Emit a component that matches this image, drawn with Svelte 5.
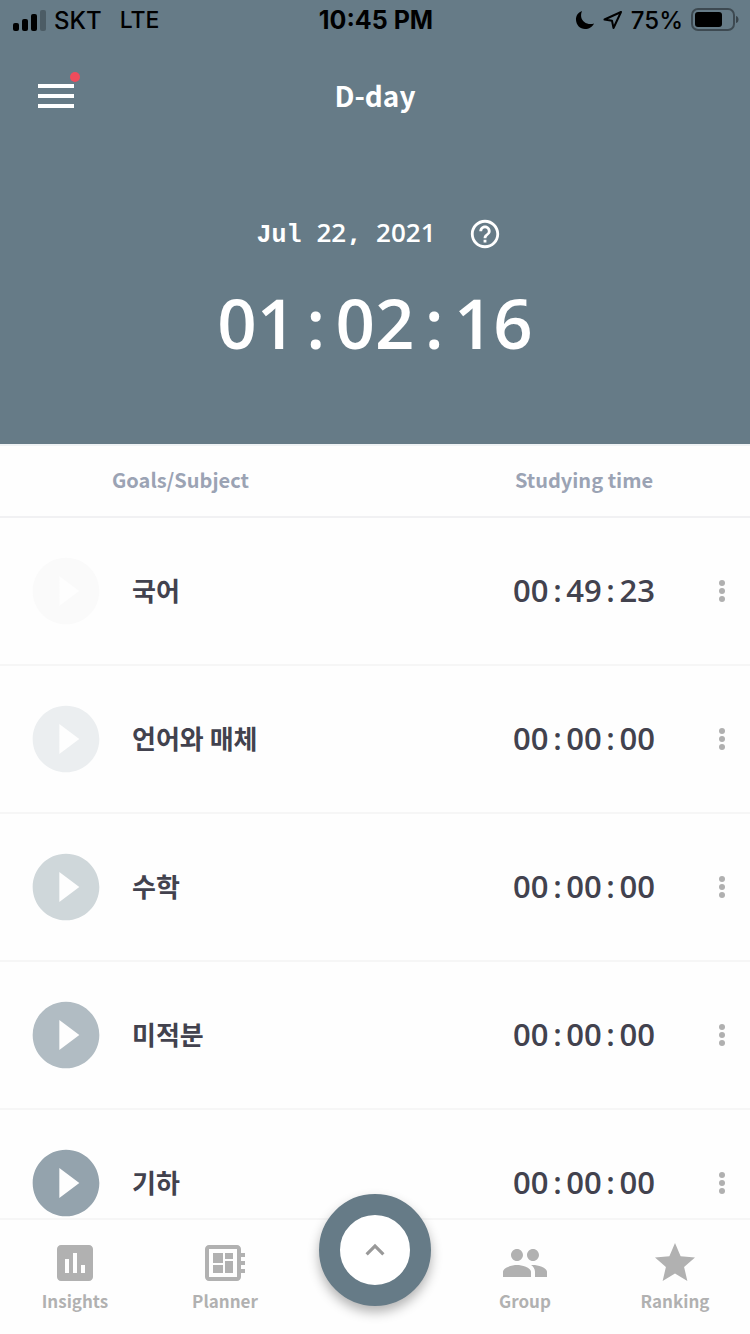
<script>
    const goals = [
        { name: '국어', time: '00:49:23', color: '#fafafa' },
        { name: '언어와 매체', time: '00:00:00', color: '#ebeef0' },
        { name: '수학', time: '00:00:00', color: '#cfd7da' },
        { name: '미적분', time: '00:00:00', color: '#b1bcc3' },
        { name: '기하', time: '00:00:00', color: '#94a3ad' }
    ];
    const total = '01:02:16';

    const leftTabs = [
        { label: 'Insights', icon: 'M19 3H5c-1.1 0-2 .9-2 2v14c0 1.1.9 2 2 2h14c1.1 0 2-.9 2-2V5c0-1.1-.9-2-2-2zM9 17H7v-7h2v7zm4 0h-2V7h2v10zm4 0h-2v-4h2v4z' },
        { label: 'Planner', icon: 'M22 9V7h-2V5c0-1.1-.9-2-2-2H4c-1.1 0-2 .9-2 2v14c0 1.1.9 2 2 2h14c1.1 0 2-.9 2-2v-2h2v-2h-2v-2h2v-2h-2V9h2zm-4 10H4V5h14v14zM6 13h5v4H6zm6-6h4v3h-4zM6 7h5v5H6zm6 4h4v6h-4z' }
    ];
    const rightTabs = [
        { label: 'Group', icon: 'M16 11c1.66 0 2.99-1.34 2.99-3S17.66 5 16 5s-3 1.34-3 3 1.34 3 3 3zm-8 0c1.66 0 2.99-1.34 2.99-3S9.66 5 8 5 5 6.34 5 8s1.34 3 3 3zm0 2c-2.33 0-7 1.17-7 3.5V19h14v-2.5c0-2.33-4.67-3.5-7-3.5zm8 0c-.29 0-.62.02-.97.05 1.16.84 1.97 1.97 1.97 3.45V19h6v-2.5c0-2.33-4.67-3.5-7-3.5z' },
        { label: 'Ranking', icon: 'M12 17.27L18.18 21l-1.64-7.03L22 9.24l-7.19-.61L12 2 9.19 8.63 2 9.24l5.46 4.73L5.82 21z' }
    ];
</script>

{#snippet clock(value)}
    {#each value.split(':') as part, i}{#if i > 0}<span class="colon">:</span>{/if}{part}{/each}
{/snippet}

{#snippet tab(item)}
    <a class="tab" href="#{item.label.toLowerCase()}">
        <svg width="48" height="48" viewBox="0 0 24 24" aria-hidden="true"><path d={item.icon} /></svg>
        <span>{item.label}</span>
    </a>
{/snippet}

<div class="app">
    <header>
        <div class="status">
            <div class="carrier">
                <svg width="33" height="22" viewBox="0 0 33 22" aria-hidden="true">
                    <rect x="0" y="14" width="6" height="8" rx="2" />
                    <rect x="9" y="10" width="6" height="12" rx="2" />
                    <rect x="18" y="5" width="6" height="17" rx="2" />
                    <rect x="27" y="1" width="6" height="21" rx="2" opacity="0.25" />
                </svg>
                <span>SKT</span>
                <span class="network">LTE</span>
            </div>
            <div class="now">10:45 PM</div>
            <div class="battery">
                <svg width="20" height="20" viewBox="0 0 20 20" aria-hidden="true">
                    <path d="M7 1C2.800 2.600.8 6 1 10c.3 5 4 9 9 9 4 0 7.500-2 9-5.500-6 2-12-1.500-12.800-6.500C5.900 4.800 6.200 2.800 7 1z" />
                </svg>
                <svg width="20" height="20" viewBox="0 0 20 20" aria-hidden="true">
                    <path d="M18 2L1.500 9.500l7.500 1.300L10.500 18z" fill="none" stroke="#000" stroke-width="2" stroke-linejoin="round" />
                </svg>
                <span>75%</span>
                <svg width="48" height="24" viewBox="0 0 48 24" aria-hidden="true">
                    <rect x="1" y="1" width="42" height="21" rx="6" fill="none" stroke="#000" stroke-opacity="0.4" stroke-width="2" />
                    <rect x="4" y="4" width="27" height="15" rx="3" />
                    <path d="M45 8c2 .5 2.500 2 2.500 3.500S47 14.500 45 15z" opacity="0.45" />
                </svg>
            </div>
        </div>

        <div class="title-bar">
            <button class="menu" aria-label="Menu">
                <svg width="48" height="48" viewBox="0 0 24 24" aria-hidden="true"><path d="M3 18h18v-2H3v2zm0-5h18v-2H3v2zm0-7v2h18V6H3z" /></svg>
                <i class="dot"></i>
            </button>
            <h1>D-day</h1>
        </div>

        <div class="date">
            <time datetime="2021-07-22"><span class="month">Jul</span> <span>22<span class="comma">,</span></span> <span>2021</span></time>
            <button aria-label="Help">
                <svg width="34" height="34" viewBox="0 0 24 24" aria-hidden="true"><path d="M11 18h2v-2h-2v2zm1-16C6.480 2 2 6.480 2 12s4.480 10 10 10 10-4.480 10-10S17.520 2 12 2zm0 18c-4.410 0-8-3.590-8-8s3.590-8 8-8 8 3.590 8 8-3.590 8-8 8zm0-14c-2.210 0-4 1.790-4 4h2c0-1.100.9-2 2-2s2 .9 2 2c0 2-3 1.750-3 5h2c0-2.250 3-2.500 3-5 0-2.210-1.790-4-4-4z" /></svg>
            </button>
        </div>
        <div class="total">{@render clock(total)}</div>
    </header>

    <main>
        <table>
            <thead>
                <tr>
                    <th class="goal-head" colspan="2">Goals/Subject</th>
                    <th class="time-head">Studying time</th>
                    <th class="more-head"></th>
                </tr>
            </thead>
            <tbody>
                {#each goals as goal}
                    <tr>
                        <td class="play">
                            <button aria-label="Start {goal.name}">
                                <svg width="80" height="80" viewBox="0 0 24 24" style="fill: {goal.color}" aria-hidden="true"><path d="M12 2C6.480 2 2 6.480 2 12s4.480 10 10 10 10-4.480 10-10S17.520 2 12 2zm-2 14.500v-9l6 4.500-6 4.500z" /></svg>
                            </button>
                        </td>
                        <td class="name">{goal.name}</td>
                        <td class="time">{@render clock(goal.time)}</td>
                        <td class="more">
                            <button aria-label="Options for {goal.name}">
                                <svg width="8" height="24" viewBox="0 0 8 24" aria-hidden="true">
                                    <circle cx="4" cy="4" r="3" />
                                    <circle cx="4" cy="12" r="3" />
                                    <circle cx="4" cy="20" r="3" />
                                </svg>
                            </button>
                        </td>
                    </tr>
                {/each}
            </tbody>
        </table>
    </main>

    <nav>
        {#each leftTabs as item}
            {@render tab(item)}
        {/each}
        <div class="center">
            <button class="fab" aria-label="Open timer">
                <svg width="38" height="38" viewBox="0 0 24 24" aria-hidden="true"><path d="M12 8l-6 6 1.410 1.410L12 10.830l4.590 4.580L18 14z" /></svg>
            </button>
        </div>
        {#each rightTabs as item}
            {@render tab(item)}
        {/each}
    </nav>
</div>

<style>
    :global(body) {
        margin: 0;
        background: #fefefe;
    }

    .app {
        display: flex;
        flex-direction: column;
        height: 100vh;
        font-family: "Noto Sans CJK KR", sans-serif;
        font-weight: 700;
        color: #42424e;
    }

    button {
        display: block;
        padding: 0;
        border: 0;
        background: none;
        cursor: pointer;
    }

    svg {
        display: block;
        flex: none;
    }

    header {
        flex: none;
        padding-bottom: 80px;
        background: #667b87;
        border-bottom: 2px solid #f0f3f5;
        color: #fff;
    }

    /* status bar */
    .status {
        display: grid;
        grid-template-columns: 1fr auto 1fr;
        align-items: center;
        height: 40px;
        padding: 0 11px 0 13px;
        color: #000;
        font-family: Inter, sans-serif;
        font-size: 24px;
        font-weight: 500;
    }

    .carrier, .battery {
        display: flex;
        align-items: center;
        gap: 8px;
    }

    .network {
        margin-left: 10px;
        font-size: 23px;
    }

    .now {
        font-size: 25px;
        font-weight: 700;
    }

    .battery {
        justify-content: flex-end;
    }

    /* title */
    .title-bar {
        display: grid;
        grid-template-columns: 48px 1fr 48px;
        align-items: center;
        height: 112px;
        padding: 0 32px;
    }

    .menu {
        position: relative;
    }

    .menu svg, .date svg {
        fill: #fff;
    }

    .dot {
        position: absolute;
        top: 0;
        right: 0;
        width: 10px;
        height: 10px;
        border-radius: 50%;
        background: #ef4c5c;
    }

    h1 {
        margin: 0;
        padding-bottom: 2px;
        font-size: 28px;
        line-height: 40px;
        text-align: center;
    }

    .date {
        display: flex;
        align-items: center;
        justify-content: center;
        gap: 32px;
        margin-top: 60px;
        padding-left: 8px;
    }

    .date time {
        display: flex;
        align-items: baseline;
        gap: 15px;
        font-family: "Open Sans", sans-serif;
        font-size: 26px;
        font-weight: 600;
        line-height: 40px;
    }

    .month {
        font-family: "Liberation Mono", monospace;
        font-size: 25px;
        font-weight: 700;
    }

    .comma, .colon {
        display: inline-block;
        width: 0.572em;
        text-align: center;
    }

    .comma {
        font-weight: 700;
    }

    .total {
        margin-top: 24px;
        font-family: "Open Sans", sans-serif;
        font-size: 69px;
        font-weight: 600;
        line-height: 84px;
        text-align: center;
    }

    /* goal list */
    main {
        flex: 1;
        min-height: 0;
        overflow-y: auto;
        scrollbar-width: none;
    }

    table {
        width: 100%;
        border-collapse: separate;
        border-spacing: 0;
    }

    th, td {
        box-sizing: border-box;
        padding: 0;
    }

    th {
        height: 72px;
        padding-bottom: 2px;
        border-bottom: 2px solid #f1f1f3;
        color: #9ba3b4;
        font-size: 20px;
        line-height: 28px;
    }

    td {
        height: 148px;
        border-bottom: 2px solid #f6f6f6;
    }

    .goal-head {
        padding-left: 112px;
        text-align: left;
    }

    .time-head {
        width: 220px;
    }

    .more-head {
        width: 56px;
    }

    .play {
        width: 132px;
        padding-left: 26px;
    }

    .name {
        padding-bottom: 4px;
        font-size: 26px;
    }

    .time {
        padding-bottom: 2px;
        font-family: "Open Sans", sans-serif;
        font-size: 31px;
        font-weight: 600;
        text-align: center;
    }

    .more button {
        margin: 0 auto;
        padding: 12px;
    }

    .more svg {
        fill: #b0b0b0;
    }

    /* bottom tabs */
    nav {
        display: grid;
        grid-template-columns: repeat(5, 1fr);
        flex: none;
        height: 114px;
        border-top: 2px solid #f6f6f6;
        background: #fefefe;
    }

    .tab {
        display: flex;
        flex-direction: column;
        align-items: center;
        gap: 2px;
        padding-top: 19px;
        color: #b1b1b1;
        font-size: 17px;
        line-height: 24px;
        text-decoration: none;
    }

    .tab svg {
        fill: #b1b1b1;
    }

    .center {
        position: relative;
    }

    .fab {
        position: absolute;
        top: -26px;
        left: 50%;
        display: flex;
        align-items: center;
        justify-content: center;
        width: 112px;
        height: 112px;
        margin-left: -56px;
        border: 21px solid #667b87;
        border-radius: 50%;
        background: #fff;
        box-shadow: 0 6px 12px rgba(0, 0, 0, 0.3);
    }

    .fab svg {
        fill: #999;
    }
</style>
